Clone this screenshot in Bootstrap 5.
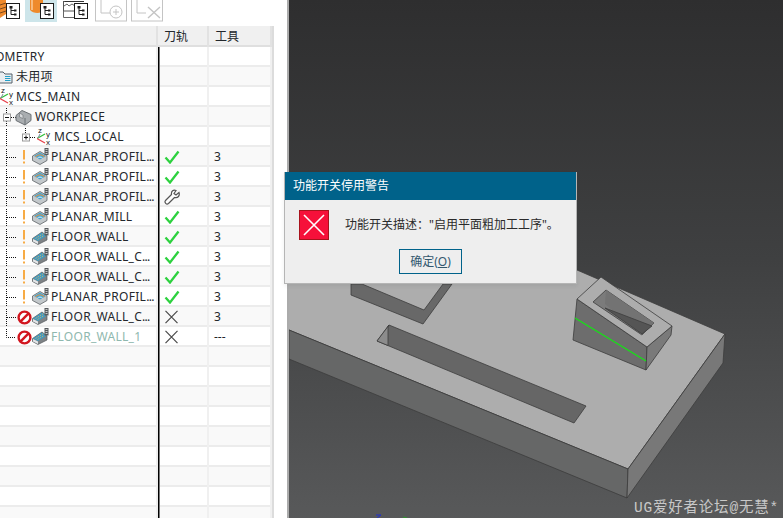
<!DOCTYPE html>
<html lang="zh">
<head>
    <meta charset="UTF-8">
    <meta name="viewport" content="width=device-width, initial-scale=1.0">
    <title>功能开关停用警告</title>
    <link href="https://cdn.jsdelivr.net/npm/bootstrap@5.3.0/dist/css/bootstrap.min.css" rel="stylesheet">
    <script src="https://cdn.jsdelivr.net/npm/bootstrap@5.3.0/dist/js/bootstrap.bundle.min.js"></script>
    <style>
        body {
            width: 783px;
            height: 518px;
            overflow: hidden;
            position: relative;
            background: #fff;
            font-family: "Noto Sans", "Noto Sans CJK SC", sans-serif;
            font-size: 12px;
            color: #23272c;
        }
        /* left panel */
        .side-panel {
            width: 289px;
            height: 518px;
            flex: none;
            overflow: hidden;
            background: #fff;
            border-right: 2px solid #ababab;
        }
        .tool-strip {
            height: 26px;
            overflow: hidden;
        }
        .tool-strip svg { display: block; }
        .tree-wrap {
            width: 274px;
            height: 492px;
            overflow: hidden;
            border-right: 2px solid #dcdcdc;
        }
        .tree-table {
            width: 272px;
            margin: 0;
            table-layout: fixed;
            border-collapse: separate;
            border-spacing: 0;
            font-size: 12px;
            line-height: 1;
        }
        .tree-table > :not(caption) > * > * {
            padding: 0;
            height: 20px;
            color: #23272c;
            background: transparent;
            box-shadow: inset 0 -2px #ececec;
            border-bottom: 0;
            border-right: 2px solid #f0f0f0;
            vertical-align: middle;
            white-space: nowrap;
            overflow: hidden;
        }
        .tree-table tbody tr:nth-child(even) > td { background: #f9f9f9; }
        .tree-table > thead > tr > th {
            height: 21px;
            background: #f0f0f0;
            box-shadow: inset 0 -2px #dfdfdf;
            border-right: 2px solid #e2e2e2;
            font-weight: 400;
            padding-left: 6px;
        }
        .tree-table > tbody > tr > td:nth-child(2) {
            box-shadow: inset 1px 0 #000, inset 2px 0 #777, inset 0 -2px #ececec;
            padding-left: 6px;
        }
        .tree-table > tbody > tr > td:nth-child(3) { padding-left: 5px; }
        .col-tree { width: 158px; }
        .col-path { width: 51px; }
        .node {
            display: flex;
            align-items: center;
            height: 20px;
            letter-spacing: .28px;
        }
        .node svg { flex: none; display: block; }
        .node-dots { letter-spacing: -.7px; }
        .node-cut { margin-left: -21px; }
        .node-off { color: #8fb8ae; }
        .dash-off { color: #8a9a94; }
        .state-icon { display: block; }
        /* viewport */
        .view-port {
            flex: 1;
            height: 518px;
            position: relative;
            background: linear-gradient(#2e2e2f, #3f4041 50%, #58595a);
        }
        .view-port svg { display: block; }
        .water-mark {
            position: absolute;
            right: 4px;
            bottom: 1px;
            color: #c8c8c8;
            font-family: "Liberation Mono", "Noto Sans CJK SC", monospace;
            font-size: 14.500px;
            line-height: 18px;
            letter-spacing: .8px;
        }
        /* dialog */
        .warn-box {
            position: absolute;
            left: 284px;
            top: 172px;
            width: 293px;
            height: 112px;
            background: #eeeeee;
            border: 0;
            border-right: 1px solid #b5b5b5;
            border-bottom: 1px solid #b5b5b5;
            border-left: 1px solid #b5b5b5;
            border-radius: 0;
        }
        .warn-head {
            height: 28px;
            padding: 0 0 0 8px;
            background: #00628a;
            color: #fff;
            border: 0;
            border-radius: 0 !important;
            line-height: 28px;
        }
        .warn-text { color: #2a2a2a; padding-left: 14px; gap: 16px; height: 49px; }
        .warn-btn {
            width: 63px;
            height: 25px;
            padding: 0;
            font-size: 12px;
            line-height: 22px;
            color: #33586e;
            background: #eeeeee;
            border: 1px solid #00628a;
            border-radius: 0;
        }
    </style>
</head>
<body>
    <svg width="0" height="0" class="position-absolute">
        <defs>
            <symbol id="axis" viewBox="0 0 14 18" width="14" height="18">
                <path d="M0 10.500 8 6" stroke="#2fbf3a" stroke-width="1.200" fill="none"/>
                <path d="M0 10.500 8 15" stroke="#e8404a" stroke-width="1.200" fill="none"/>
                <path d="M1 10 3 6" stroke="#7c8a96" stroke-width="1" fill="none"/>
                <text x="1" y="5" font-size="8" font-family="Liberation Sans" fill="#222">z</text>
                <text x="9" y="8.500" font-size="8" font-family="Liberation Sans" fill="#222">y</text>
                <text x="9" y="16.500" font-size="8" font-family="Liberation Sans" fill="#222">x</text>
            </symbol>
            <symbol id="op-planar" viewBox="0 0 17 17" width="17" height="17">
                <path d="M.5 8 8 3.500 15 7.500V12.500L8 16.500 .5 12.500Z" fill="#c3c8cb" stroke="#5d6266" stroke-width=".8"/>
                <path d="M2 8 8 4.500 14 8 8 11.500Z" fill="#3fa4d2"/>
                <path d="M3.500 9C5.500 6 10.500 6 12.500 9" fill="none" stroke="#f0903f" stroke-width="1.200"/>
                <path d="M5.500 10C6.500 8.800 9.500 8.800 10.500 10" fill="none" stroke="#e6f2f5" stroke-width="1"/>
                <rect x="12.500" y="0" width="4" height="7" fill="#55595c"/>
                <path d="M13.500 1.500h2M13.500 3.500h2M13.500 5.500h2" stroke="#e2e2e2" stroke-width=".8"/>
            </symbol>
            <symbol id="op-floor" viewBox="0 0 17 17" width="17" height="17">
                <path d="M.5 10.500 10 4 15 8V12L6 16.500 .5 13.500Z" fill="#7f8386" stroke="#55595c" stroke-width=".7"/>
                <path d="M1 10.500 10 4.500 14.500 7.800 6 13Z" fill="#3a9dc6"/>
                <path d="M3.500 10.500 11 5.800M5.500 11.500 12.500 7.200" stroke="#e7a75e" stroke-width=".9" stroke-dasharray="1.500 1"/>
                <path d="M1 11 6 13.500V16L1 13.500Z" fill="#e3e6e8"/>
                <rect x="12.500" y="0" width="4" height="7.500" fill="#55595c"/>
                <path d="M13.500 1.500h2M13.500 3.500h2M13.500 5.500h2" stroke="#e2e2e2" stroke-width=".8"/>
            </symbol>
            <symbol id="bang" viewBox="0 0 4 14" width="4" height="14">
                <rect x="1" y="0" width="2" height="9.500" fill="#f7ab45"/>
                <rect x="1" y="11.500" width="2" height="2" fill="#f7ab45"/>
            </symbol>
            <symbol id="no-sign" viewBox="0 0 15 15" width="15" height="15">
                <circle cx="7.500" cy="7.500" r="5.900" fill="#fff" stroke="#d2161f" stroke-width="2.400"/>
                <path d="M3.400 11.600 11.600 3.400" stroke="#d2161f" stroke-width="2.400"/>
            </symbol>
            <symbol id="doc-tree" viewBox="0 0 14 16" width="14" height="16">
                <rect x=".500" y=".500" width="13" height="15" fill="#fff" stroke="#1c1c1c"/>
                <path d="M5 4V11.500H8M5 7.500H8" stroke="#1c1c1c" fill="none"/>
                <rect x="3.500" y="3" width="3" height="2.500" fill="#1c1c1c"/>
                <rect x="8" y="6.500" width="2.500" height="2" fill="#1c1c1c"/>
                <rect x="8" y="10.500" width="2.500" height="2" fill="#1c1c1c"/>
            </symbol>
            <symbol id="op-check" viewBox="0 0 16 14" width="16" height="14">
                <path d="M1.500 7.500 6 12.500 14.500 1.500" fill="none" stroke="#2dd13f" stroke-width="2.300"/>
            </symbol>
            <symbol id="op-cross" viewBox="0 0 16 14" width="16" height="14">
                <path d="M1.500 .8 13.500 13.200M13.500 .8 1.500 13.200" stroke="#4a4a4a" stroke-width="1.200"/>
            </symbol>
            <g id="op-line">
                <path d="M6.500 -1V20" stroke="#111" stroke-dasharray="1 1"/>
                <path d="M7 9.500H16" stroke="#111" stroke-dasharray="1 1"/>
            </g>
        </defs>
    </svg>

    <div class="d-flex">
        <div class="side-panel">
            <div class="tool-strip">
                <svg width="170" height="24" viewBox="0 0 170 24">
                    <path d="M0 0H6V14L0 18Z" fill="#ef8a2d"/>
                    <path d="M0 5 6 3M0 9 6 7M0 13 6 11" stroke="#7d4a1a"/>
                    <use href="#doc-tree" x="6" y="3"/>
                    <rect x="25" y="0" width="32" height="22" fill="#cde5ea"/>
                    <path d="M30 0H43V10C42 14 33 14 30 10Z" fill="#ee8a2b"/>
                    <path d="M32 0V10" stroke="#f8bb7d" stroke-width="2"/>
                    <path d="M41 8 47 18" stroke="#8b8f92" stroke-width="3"/>
                    <use href="#doc-tree" x="40" y="3"/>
                    <path d="M63.500 1.500H84" fill="none" stroke="#333"/>
                    <path d="M63.500 1V11H74" fill="#fff" stroke="#555"/>
                    <path d="M64 6 67 4 69 6 72 4 75 6 78 4 80 6" fill="none" stroke="#666"/>
                    <path d="M63.500 11V17.500H74" fill="none" stroke="#666"/>
                    <use href="#doc-tree" x="74" y="3"/>
                    <g fill="none" stroke="#c4c4c4">
                        <rect x="95.500" y="-2" width="31" height="23"/>
                        <path d="M101 0V13H110"/>
                        <circle cx="116" cy="12" r="6"/>
                        <path d="M113 12H119M116 9V15"/>
                        <rect x="131.500" y="-2" width="31" height="23"/>
                        <path d="M137 0V13H146"/>
                        <path d="M148 7 160 18M160 7 148 18" stroke-width="1.400"/>
                    </g>
                </svg>
            </div>
            <div class="tree-wrap">
                <table class="table tree-table">
                    <thead>
                        <tr><th class="col-tree"></th><th class="col-path">刀轨</th><th>工具</th></tr>
                    </thead>
                    <tbody>
                        <tr><td><div class="node node-cut">GEOMETRY</div></td><td></td><td></td></tr>
                        <tr><td><div class="node">
                            <svg width="16" height="18" viewBox="0 0 16 18">
                                <path d="M-2 4H3L5 6H12V15H-2Z" fill="#e9edf0" stroke="#55606a"/>
                                <path d="M5 8.500H10.500M5 10.500H10.500M5 12.500H10.500" stroke="#24a0c8"/>
                            </svg>未用项</div></td><td></td><td></td></tr>
                        <tr><td><div class="node">
                            <svg width="16" height="18" viewBox="0 0 16 18"><use href="#axis" x="0" y="0"/></svg>MCS_MAIN</div></td><td></td><td></td></tr>
                        <tr><td><div class="node">
                            <svg width="35" height="18" viewBox="0 0 35 18">
                                <path d="M6.500 0V5M6.500 13V18M11 9.500H16" stroke="#111" stroke-dasharray="1 1"/>
                                <rect x="3.500" y="6" width="7" height="7" fill="#fff" stroke="#9a9a9a"/>
                                <path d="M5 9.500H9" stroke="#111"/>
                                <path d="M16 7.500 22 2.500 31 6.500V12.500L25 17 16 12.500Z" fill="#a9adb0" stroke="#6b7074"/>
                                <path d="M19.500 5V9L23 10.500V7Z" fill="#d8dadc" stroke="#6b7074" stroke-width=".6"/>
                                <path d="M25 10V17" stroke="#6b7074"/>
                            </svg>WORKPIECE</div></td><td></td><td></td></tr>
                        <tr><td><div class="node">
                            <svg width="54" height="18" viewBox="0 0 54 18">
                                <path d="M6.500 -1V18M25.500 0V5M30 9.500H36" stroke="#111" stroke-dasharray="1 1"/>
                                <rect x="22.500" y="6" width="7" height="7" fill="#fff" stroke="#9a9a9a"/>
                                <path d="M24 9.500H28M26 7.500V11.500" stroke="#111"/>
                                <use href="#axis" x="37" y="0"/>
                            </svg>MCS_LOCAL</div></td><td></td><td></td></tr>
                        <tr><td><div class="node"><svg width="51" height="18" viewBox="0 0 51 18"><use href="#op-line"/><use href="#bang" x="22" y="2"/><use href="#op-planar" x="32" y="0"/></svg>PLANAR_PROFIL<span class="node-dots">...</span></div></td><td><svg class="state-icon" width="16" height="14"><use href="#op-check"/></svg></td><td>3</td></tr>
                        <tr><td><div class="node"><svg width="51" height="18" viewBox="0 0 51 18"><use href="#op-line"/><use href="#bang" x="22" y="2"/><use href="#op-planar" x="32" y="0"/></svg>PLANAR_PROFIL<span class="node-dots">...</span></div></td><td><svg class="state-icon" width="16" height="14"><use href="#op-check"/></svg></td><td>3</td></tr>
                        <tr><td><div class="node"><svg width="51" height="18" viewBox="0 0 51 18"><use href="#op-line"/><use href="#bang" x="22" y="2"/><use href="#op-planar" x="32" y="0"/></svg>PLANAR_PROFIL<span class="node-dots">...</span></div></td><td>
                            <svg class="state-icon" width="16" height="16" viewBox="0 0 16 16">
                                <path d="M15 3.500 12 6 10 4.500 12 1.500C9.500 .5 7 2 7.500 5.500L1.500 11.500C0 13.500 2.500 16 4.500 14.500L10.500 8.500C14 9.500 16 6.500 15 3.500Z" fill="#fff" stroke="#555" stroke-width="1.200"/>
                            </svg></td><td>3</td></tr>
                        <tr><td><div class="node"><svg width="51" height="18" viewBox="0 0 51 18"><use href="#op-line"/><use href="#bang" x="22" y="2"/><use href="#op-planar" x="32" y="0"/></svg>PLANAR_MILL</div></td><td><svg class="state-icon" width="16" height="14"><use href="#op-check"/></svg></td><td>3</td></tr>
                        <tr><td><div class="node"><svg width="51" height="18" viewBox="0 0 51 18"><use href="#op-line"/><use href="#bang" x="22" y="2"/><use href="#op-floor" x="32" y="0"/></svg>FLOOR_WALL</div></td><td><svg class="state-icon" width="16" height="14"><use href="#op-check"/></svg></td><td>3</td></tr>
                        <tr><td><div class="node"><svg width="51" height="18" viewBox="0 0 51 18"><use href="#op-line"/><use href="#bang" x="22" y="2"/><use href="#op-floor" x="32" y="0"/></svg>FLOOR_WALL_C<span class="node-dots">...</span></div></td><td><svg class="state-icon" width="16" height="14"><use href="#op-check"/></svg></td><td>3</td></tr>
                        <tr><td><div class="node"><svg width="51" height="18" viewBox="0 0 51 18"><use href="#op-line"/><use href="#bang" x="22" y="2"/><use href="#op-floor" x="32" y="0"/></svg>FLOOR_WALL_C<span class="node-dots">...</span></div></td><td><svg class="state-icon" width="16" height="14"><use href="#op-check"/></svg></td><td>3</td></tr>
                        <tr><td><div class="node"><svg width="51" height="18" viewBox="0 0 51 18"><use href="#op-line"/><use href="#bang" x="22" y="2"/><use href="#op-planar" x="32" y="0"/></svg>PLANAR_PROFIL<span class="node-dots">...</span></div></td><td><svg class="state-icon" width="16" height="14"><use href="#op-check"/></svg></td><td>3</td></tr>
                        <tr><td><div class="node"><svg width="51" height="18" viewBox="0 0 51 18"><use href="#op-line"/><use href="#no-sign" x="17" y="2"/><use href="#op-floor" x="32" y="0"/></svg>FLOOR_WALL_C<span class="node-dots">...</span></div></td><td><svg class="state-icon" width="16" height="14"><use href="#op-cross"/></svg></td><td>3</td></tr>
                        <tr><td><div class="node node-off"><svg width="51" height="18" viewBox="0 0 51 18">
                            <path d="M6.500 -1V9.500H16" fill="none" stroke="#111" stroke-dasharray="1 1"/><use href="#no-sign" x="17" y="2"/><use href="#op-floor" x="32" y="0"/></svg>FLOOR_WALL_1</div></td><td><svg class="state-icon" width="16" height="14"><use href="#op-cross"/></svg></td><td class="dash-off">---</td></tr>
                        <tr><td></td><td></td><td></td></tr>
                        <tr><td></td><td></td><td></td></tr>
                        <tr><td></td><td></td><td></td></tr>
                        <tr><td></td><td></td><td></td></tr>
                        <tr><td></td><td></td><td></td></tr>
                        <tr><td></td><td></td><td></td></tr>
                        <tr><td></td><td></td><td></td></tr>
                        <tr><td></td><td></td><td></td></tr>
                        <tr><td></td><td></td><td></td></tr>
                    </tbody>
                </table>
            </div>
        </div>

        <div class="view-port">
            <!-- viewBox keeps the screenshot's x coordinates -->
            <svg width="494" height="518" viewBox="289 0 494 518">
                <g stroke="#3c3c3c" stroke-width=".8" stroke-linejoin="round">
                    <!-- plate -->
                    <path d="M289 240 520 240 577 270 725 334 628 469 289 330Z" fill="#adadad" stroke="none"/>
                    <path d="M577 270 725 334 628 469 289 330" fill="none"/>
                    <path d="M289 330 628 469 627 498 289 359Z" fill="#666767"/>
                    <path d="M628 469 725 334 723 363 627 498Z" fill="#787878"/>
                    <!-- pocket under the dialog -->
                    <path d="M351 284V295L423 324 452 284H443L424 310 362 284Z" fill="#686868"/>
                    <!-- slot -->
                    <path d="M389 325 377 341 574 423 586 406Z" fill="#666"/>
                    <path d="M389 325 377 341 388 345.500V326Z" fill="#8c8c8c"/>
                    <!-- raised block -->
                    <path d="M577 299 573 340 646 370 647 347Z" fill="#6d6d6d"/>
                    <path d="M647 347 646 370 671 335 672 326Z" fill="#7a7a7a"/>
                    <path d="M577 299 601 277 672 326 647 347Z" fill="#adadad"/>
                    <path d="M606 290 593 302 642 335 654 323Z" fill="#7b7b7b"/>
                    <path d="M605 304 606 290 654 323 642 335Z" fill="#737373" stroke="none"/>
                    <path d="M605 308 652 326 642 334Z" fill="#555"/>
                </g>
                <path d="M575 318 646 361" stroke="#17e017" stroke-width="1.400"/>
                <path d="M376 515H381L377 518" stroke="#2030d0" fill="none"/>
                <path d="M403 517 407 518" stroke="#2a9a2a"/>
            </svg>
            <div class="water-mark">UG爱好者论坛@无慧*</div>
        </div>
    </div>

    <div class="card warn-box shadow-sm">
        <div class="card-header warn-head">功能开关停用警告</div>
        <div class="d-flex align-items-center warn-text">
            <svg width="30" height="30" viewBox="0 0 30 30" class="flex-none">
                <rect x=".5" y=".5" width="29" height="29" fill="#f6103a" stroke="#a8121c"/>
                <path d="M5 5 25 25M25 5 5 25" stroke="#fff" stroke-width="1.600"/>
            </svg>
            <span>功能开关描述："启用平面粗加工工序"。</span>
        </div>
        <div class="text-center">
            <button type="button" class="btn warn-btn">确定(<u>O</u>)</button>
        </div>
    </div>
</body>
</html>
